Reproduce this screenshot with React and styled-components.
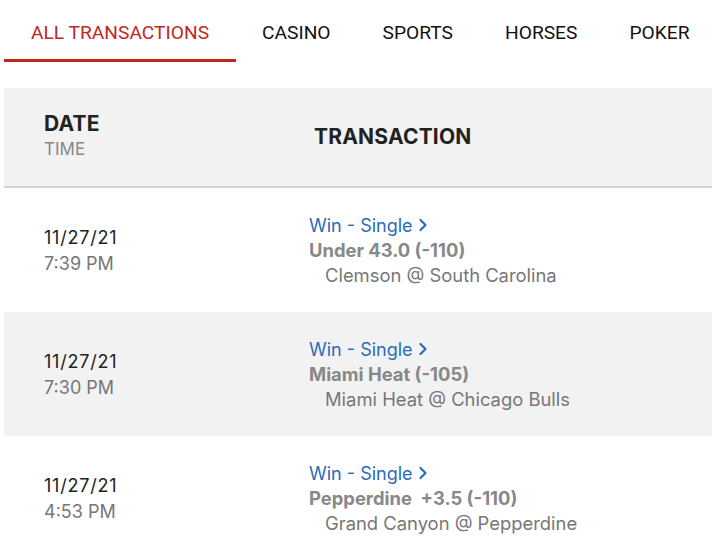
import styled, { createGlobalStyle } from "styled-components";

const GlobalStyle = createGlobalStyle`
  body {
    margin: 0;
    background: #fff;
    font-family: Inter, "Noto Sans", sans-serif;
  }
`;

const Page = styled.div`
  width: 712px;
  height: 554px;
  overflow: hidden;
  padding-left: 4px;
  box-sizing: border-box;
`;

const Tabs = styled.div`
  display: flex;
  height: 88px;
  align-items: flex-start;
`;

const Tab = styled.div`
  font-family: Roboto, "Liberation Sans", sans-serif;
  font-size: 19.2px;
  height: 62px;
  line-height: 66px;
  box-sizing: border-box;
  white-space: nowrap;
  flex-shrink: 0;
  color: ${(p) => (p.$active ? "#c1271f" : "#111")};
  border-bottom: 3px solid ${(p) => (p.$active ? "#c1271f" : "transparent")};
  padding: 0 ${(p) => (p.$active ? "27px" : "26px")};
`;

const Row = styled.div`
  display: grid;
  grid-template-columns: 265px 1fr;
  align-items: center;
  background: ${(p) => (p.$shaded ? "#f2f2f2" : "#fff")};
  height: ${(p) => p.$height}px;
  padding-left: 40px;
  box-sizing: border-box;
`;

const Header = styled(Row)`
  background: #f2f2f2;
  border-bottom: 2px solid #d3d3d3;
`;

const HeadTitle = styled.div`
  font-size: 21px;
  font-weight: 700;
  color: #222;
  line-height: 24px;
  letter-spacing: 0.2px;
  padding-left: ${(p) => (p.$indent ? "5px" : "0")};
`;

const HeadSub = styled.div`
  font-size: 17px;
  color: #888;
  line-height: 26px;
`;

const DateText = styled.div`
  font-size: 18px;
  color: #222;
  line-height: 27px;
  letter-spacing: 0.8px;
`;

const TimeText = styled.div`
  font-size: 18px;
  color: #777;
  line-height: 26px;
`;

const Detail = styled.div`
  display: flex;
  flex-direction: column;
  line-height: 25px;
  font-size: 18.4px;
`;

const BetLink = styled.a`
  color: #2b6cb8;
  display: inline-flex;
  align-items: center;
  gap: 5px;
  text-decoration: none;
  font-size: 18px;
`;

const Pick = styled.div`
  color: #888;
  font-weight: 700;
  white-space: pre;
`;

const Game = styled.div`
  color: #777;
  padding-left: 16px;
`;

const Chevron = () => (
  <svg width="10" height="14" viewBox="0 0 10 14" fill="none">
    <path d="M2.5 2 L7.5 7 L2.5 12" stroke="#2b6cb8" strokeWidth="2.2" strokeLinecap="round" strokeLinejoin="round" />
  </svg>
);

const tabs = ["ALL TRANSACTIONS", "CASINO", "SPORTS", "HORSES", "POKER"];

const rows = [
  { date: "11/27/21", time: "7:39 PM", pick: "Under 43.0 (-110)", game: "Clemson @ South Carolina" },
  { date: "11/27/21", time: "7:30 PM", pick: "Miami Heat (-105)", game: "Miami Heat @ Chicago Bulls" },
  { date: "11/27/21", time: "4:53 PM", pick: "Pepperdine  +3.5 (-110)", game: "Grand Canyon @ Pepperdine" },
];

export default function App() {
  return (
    <Page>
      <GlobalStyle />
      <Tabs>
        {tabs.map((t, i) => (
          <Tab key={t} $active={i === 0}>
            {t}
          </Tab>
        ))}
      </Tabs>
      <Header $height={100}>
        <div>
          <HeadTitle>DATE</HeadTitle>
          <HeadSub>TIME</HeadSub>
        </div>
        <HeadTitle $indent>TRANSACTION</HeadTitle>
      </Header>
      {rows.map((r, i) => (
        <Row key={i} $shaded={i % 2 === 1} $height={124}>
          <div>
            <DateText>{r.date}</DateText>
            <TimeText>{r.time}</TimeText>
          </div>
          <Detail>
            <div>
              <BetLink href="#">
                Win - Single <Chevron />
              </BetLink>
            </div>
            <Pick>{r.pick}</Pick>
            <Game>{r.game}</Game>
          </Detail>
        </Row>
      ))}
    </Page>
  );
}
